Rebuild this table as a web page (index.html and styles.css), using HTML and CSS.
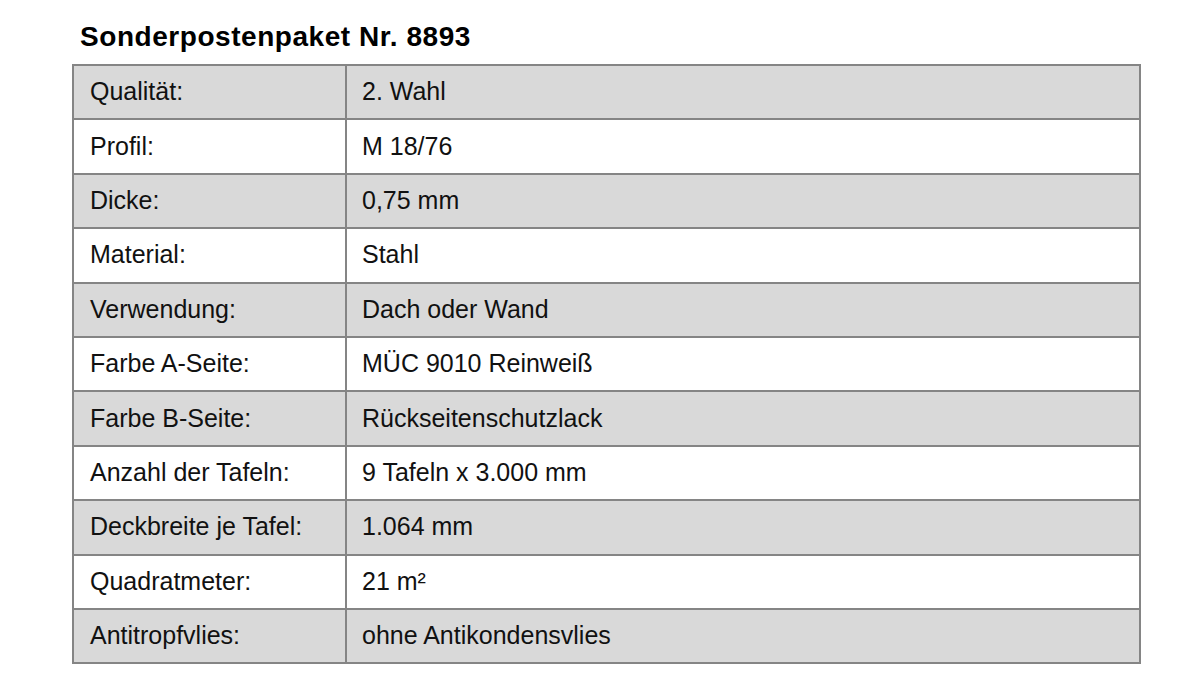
FILE: index.html
```html
<!DOCTYPE html>
<html lang="de">
<head>
<meta charset="utf-8">
<title>Sonderpostenpaket Nr. 8893</title>
<link rel="stylesheet" href="styles.css">
</head>
<body>
<div class="sheet">
  <h1 class="title">Sonderpostenpaket Nr. 8893</h1>
  <table class="specs">
    <colgroup><col class="col-label"><col class="col-value"></colgroup>
    <tbody>
      <tr class="shaded"><td>Qualität:</td><td>2. Wahl</td></tr>
      <tr><td>Profil:</td><td>M 18/76</td></tr>
      <tr class="shaded"><td>Dicke:</td><td>0,75 mm</td></tr>
      <tr><td>Material:</td><td>Stahl</td></tr>
      <tr class="shaded"><td>Verwendung:</td><td>Dach oder Wand</td></tr>
      <tr><td>Farbe A-Seite:</td><td>MÜC 9010 Reinweiß</td></tr>
      <tr class="shaded"><td>Farbe B-Seite:</td><td>Rückseitenschutzlack</td></tr>
      <tr><td>Anzahl der Tafeln:</td><td>9 Tafeln x 3.000 mm</td></tr>
      <tr class="shaded"><td>Deckbreite je Tafel:</td><td>1.064 mm</td></tr>
      <tr><td>Quadratmeter:</td><td>21 m²</td></tr>
      <tr class="shaded"><td>Antitropfvlies:</td><td>ohne Antikondensvlies</td></tr>
    </tbody>
  </table>
</div>
</body>
</html>
```

FILE: styles.css
```css
html, body {
  margin: 0;
  padding: 0;
  background: #ffffff;
}

body {
  font-family: "Liberation Sans", Arial, sans-serif;
  color: #111111;
}

.sheet {
  padding: 20px 0 0 72px;
  width: 1069px;
}

.title {
  margin: 0 0 10px 8px;
  font-size: 28px;
  line-height: 34px;
  font-weight: bold;
  letter-spacing: 0.55px;
  color: #000000;
}

.specs {
  width: 1069px;
  border-collapse: collapse;
  table-layout: fixed;
}

.col-label {
  width: 273px;
}

.specs td {
  height: 50.4px;
  padding: 0 0 2px 16px;
  border: 2px solid #858585;
  font-size: 25px;
  line-height: 28px;
  vertical-align: middle;
  background: #ffffff;
}

.specs td + td {
  padding-left: 15px;
}

.specs tr.shaded td {
  background: #d9d9d9;
}
```
